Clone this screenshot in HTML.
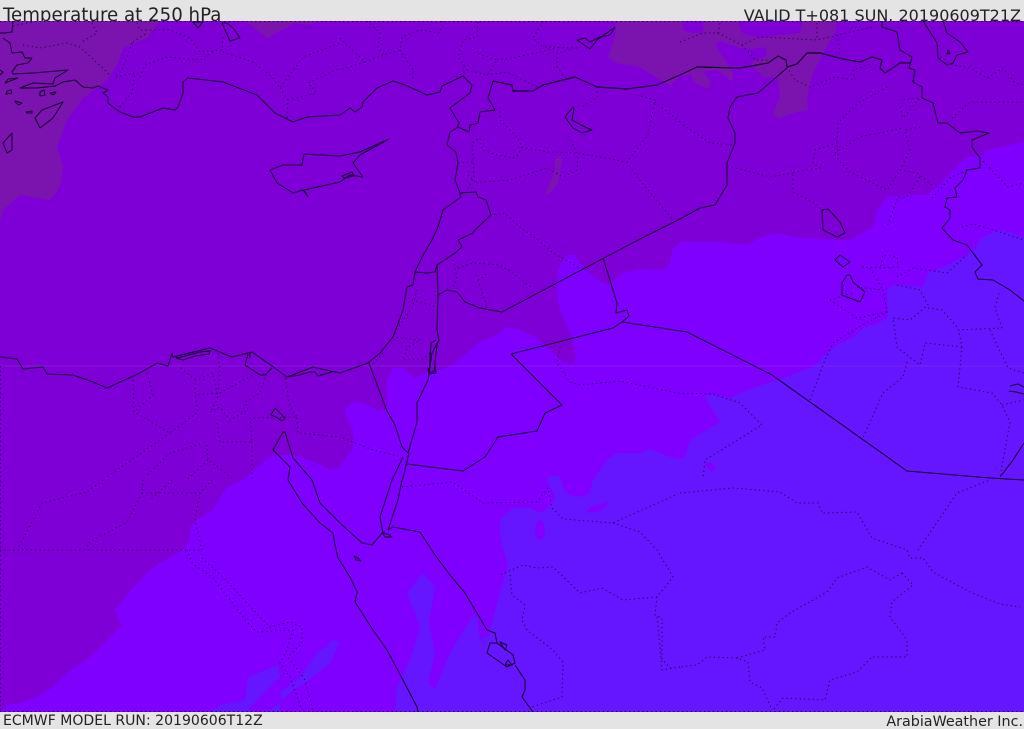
<!DOCTYPE html>
<html><head><meta charset="utf-8"><title>Temperature at 250 hPa</title>
<style>
html,body{margin:0;padding:0;background:#e4e4e4}
#p{position:relative;width:1024px;height:729px;overflow:hidden;background:#e4e4e4;font-family:"DejaVu Sans",sans-serif;color:#222}
.t{position:absolute;white-space:nowrap;line-height:1}
svg{position:absolute;left:0;top:21px}
</style></head><body><div id="p">
<div class="t" style="left:3px;top:7px;font-size:18.2px">Temperature at 250 hPa</div>
<div class="t" style="right:3px;top:8px;font-size:16px">VALID T+081 SUN. 20190609T21Z</div>
<div class="t" style="left:3px;top:714px;font-size:14.05px">ECMWF MODEL RUN: 20190606T12Z</div>
<div class="t" style="right:1px;top:715px;font-size:14.3px">ArabiaWeather Inc.</div>
<svg width="1024" height="691" viewBox="0 21 1024 691" xmlns="http://www.w3.org/2000/svg">
<rect x="0" y="21" width="1024" height="691" fill="#7e00d6"/>
<g fill="#7b14ae">
<path d="M0 21H160L147 38 123 48 118 63 107 80 83 98 67 120 57 147 63 167 60 187 50 200 20 195 3 210 0 222Z"/>
<path d="M245 21 267 38 295 23 308 25 320 21Z"/>
<path d="M617 21 615 37 608 57 617 63 640 67 657 78 670 85 680 76 692 75 693 82 708 89 711 82 703 72 717 70 733 82 733 72 715 45 720 41 740 48 752 49 765 47 767 55 750 63 763 77 777 77 780 97 773 113 778 119 793 113 808 110 807 97 813 73 823 53 835 33 837 21Z"/>
<path d="M560 156 555 160 555 170 547 190 544 195 550 193 558 183 562 160Z"/>
</g>
<g fill="#7e00d6">
<path d="M683 21 683 30 692 33 703 33 704 21Z"/>
<path d="M738 21 742 33 760 38 780 35 800 33 802 23 802 21Z"/>
</g>
<path fill="#7f00ff" d="M0 712V711L7 705 20 703 37 697 53 687 67 673 90 657 107 640 122 625 115 610 127 595 147 573 160 563 183 550 190 540 190 527 197 520 213 510 220 497 227 487 243 480 257 467 273 455 293 455 317 463 330 470 340 467 353 447 353 430 345 413 345 410 353 402 363 403 377 410 387 411 387 380 393 368 403 368 415 378 427 373 440 370 453 365 468 352 480 342 493 337 507 327 520 330 537 338 550 350 560 360 573 365 576 357 572 337 560 310 557 293 558 270 567 255 575 255 583 267 598 280 608 285 623 273 640 269 663 270 670 263 672 250 680 242 720 242 747 245 760 238 777 233 800 238 840 240 850 240 873 227 877 210 887 197 907 195 927 195 937 187 950 173 963 160 970 156 980 157 987 150 1024 142V712Z"/>
<path fill="#6516ff" d="M395 712 397 687 410 660 420 627 407 593 423 573 435 587 429 623 435 653 428 683 435 689 450 653 473 615 477 617 480 639 488 637 500 593 508 565 500 537 500 520 513 508 530 508 540 513 550 507 555 497 547 480 549 476 560 476 564 490 570 495 580 497 589 494 593 480 607 460 617 453 640 453 650 449 670 457 680 459 685 457 690 440 703 432 720 422 713 410 705 398 710 394 730 398 747 390 777 380 813 367 827 353 840 343 853 338 863 328 880 323 888 315 887 290 893 285 923 287 928 273 943 267 963 257 977 247 980 238 1000 230 1013 233 1024 238V712Z"/>
<g fill="#6516ff">
<path d="M210 712 220 705 245 700 248 677 263 671 278 665 280 677 257 700 247 712Z"/>
<path d="M282 700 280 693 300 677 317 653 333 640 340 642 330 663 307 682 293 690Z"/>
<path d="M267 712 280 703 280 712Z"/>
</g>
<g fill="#7f00ff">
<ellipse cx="540" cy="530" rx="5" ry="10"/>
<path d="M586 513 590 507 608 502 606 507 596 512Z"/>
<path d="M705 464 710 462 716 469 711 472Z"/>
</g>
<path d="M0 366H1024" stroke="#8f2ee0" stroke-width="1" opacity=".55" fill="none"/>

<g fill="none" stroke="#12002e" stroke-width="1" stroke-dasharray="1.2 3.2" opacity=".9">
<path d="M0 21.5H1024M0 711.5H1024"/>
<path d="M.5 366V712M0 550H202"/>
<path d="M13 26 33 22M23 45 40 48 67 43 80 47 110 75M92 23 97 33 80 43M137 23 140 30 170 30 190 38 200 52 222 50 223 37M133 42 147 33M132 43 122 70 115 77 135 73 132 93 117 110M140 77 145 65 167 57 200 60 213 52M223 52 253 62 273 78 280 88 303 57 340 43M280 88 288 100 287 118M288 100 317 93 308 83 340 68"/>
<path d="M340 38 350 48 365 62 340 70M365 62 383 55 400 50 402 37 420 30 440 33 443 21M367 21 380 33 378 47 383 55M400 50 413 70 413 83M478 22 477 37 463 40 458 57 467 70 457 77M467 70 487 75 497 60 473 52M497 60 517 57 540 52 560 47M543 21 533 38 543 47 578 48M557 67 557 53 573 49M557 67 565 78M487 75 507 72 537 87M597 87 597 98 580 108"/>
<path d="M500 107 500 120 517 137 522 147 518 155 513 158 497 155 482 150 480 138 472 143 473 160 474 177 467 190M522 147 547 152 577 153 627 162 648 135 655 100 638 95M655 102 680 122M627 162 637 177 673 220M577 153 567 133M578 157 577 170 563 177 547 168 510 180 483 182 475 182M468 175 475 182M458 163 473 162M490 215 505 213 520 227 538 240 553 253 580 268"/>
<path d="M453 260 457 277 453 287M458 268 473 263 500 265 513 273 532 288M478 280 488 273M478 280 487 307M417 290 412 308 398 327 393 337 420 340 407 348 403 360 423 359 430 353M412 300 437 307M383 353 372 365M560 347 557 363 570 382 580 385 620 381 677 393 713 394 740 403 762 425 705 460 703 478M343 438 373 450 398 456M402 487 453 482 483 503 537 502 548 488 552 508 563 519 613 523 678 494"/>
<path d="M613 523 640 532 657 550 673 577 657 597 655 615 662 618 662 660 673 670M657 597 623 600 602 588 580 593 553 567 537 568 523 565 500 575M510 575 512 595 525 605 522 620 527 630 553 650 563 662 562 697 532 707M680 667 662 670 657 615"/>
<path d="M680 493 733 488 780 492 797 503 818 503 822 513 857 512 872 538 907 550 910 558 923 558 933 572 970 592 1000 604 1020 607M918 550 957 493 990 480M902 573 913 585 892 602 890 617 907 640 907 657 872 657 857 672 830 680 825 700 783 698 773 710M902 573 890 580 867 567 837 578 827 592 790 613 777 623 775 637 763 637 765 650 737 658 748 662 750 682 762 688 772 710M737 658 707 657 697 665 680 667"/>
<path d="M810 400 825 360 833 343 857 328 887 312 883 290 857 287M830 300 857 318 887 312M830 300 852 293M862 267 883 268 898 267 897 257 883 255 880 268M870 268 883 290M897 277 913 268 947 273 967 255M897 285 920 290 928 305 910 320 893 318 897 347 920 365 925 343 962 347M928 308 942 310 958 328 962 347 958 387 992 393 1002 405 1010 422 1000 477M1002 405 1024 400M907 362 903 377 883 393 862 440M958 330 1002 328 995 308 1000 290M990 330 1008 368 1024 373"/>
<path d="M680 42 703 33 718 33 720 23M718 33 742 45 760 37 780 38 817 40 838 35 873 27M742 45 753 57 755 60 767 60M838 35 840 57M817 23 817 40M787 67 795 80 810 87 835 77 855 80 853 70 873 63M887 87 858 103 838 123 837 143 838 160 850 172 887 190 900 170 910 150 905 130 920 127M837 143 815 150 813 163 820 168 793 172 793 192 815 203 822 210M793 173 770 177 728 166M835 153 860 137 903 128M900 170 917 173 932 185M920 177 907 197 898 197 887 227M683 125 710 143 732 145M900 107 903 118 920 98 900 100M940 57 953 65 970 68 987 78 1003 68 1015 83 1024 85M952 118 970 102 1024 102M980 158 1008 187 1024 183M932 198 950 178 967 170M962 227 973 224 1000 232 1024 240"/>
<path d="M133 380 134 412 170 433 198 412 195 395 195 380 180 367M147 373 153 395 134 412M170 433 107 477M195 380 213 373 217 393 195 395M218 353 220 373 217 400 210 412 220 407 230 420 248 410 245 402 260 393 267 373M220 393 240 382 253 375M217 423 220 442 252 442 250 418 297 417 298 433 340 437M285 378 290 407 297 417M252 442V480M207 445 208 460 218 467 232 478M200 444 170 453 145 477M208 460 187 480M103 480 87 492 42 503 18 548M143 480 142 493 127 522 88 543 87 550M142 493 200 493 212 480M200 493 195 520 202 550M187 550 192 563 213 578 247 622 257 632 293 630 287 650 280 663 290 677 302 710M202 558 223 577 260 617 270 627 290 622 302 627 302 643 288 657 305 680 313 710M172 480 150 500"/>
</g>

<g fill="none" stroke="#10002a" stroke-width="1" stroke-linejoin="round">
<path d="M13 21 12 32 5 33 0 33M3 38 10 43 12 53 22 52 25 58 32 58 28 63 17 65 12 72 13 74 33 73 68 70 55 78 53 84 33 83 20 88 37 88 55 86 63 82 75 80 83 87 93 88 98 86 108 90 103 93 108 97 108 103 120 112 133 117 140 117 163 108 175 110 178 107 183 93 183 82 188 78 223 82 257 95 275 113 293 122 307 117 340 115 350 108 355 112 362 107 363 102 377 88 393 81 405 85 427 95 440 92 442 86 463 76 472 85 470 93 450 108 459 123 457 128 450 132 447 145 456 152 458 163 455 180 460 193 461 197 443 210 438 227 432 240 422 257 415 272 413 285 407 287 403 310 393 337 380 353 368 363 340 373 330 371 313 367 287 377 272 366 252 352 232 357 210 348 173 357 172 353 168 366 157 363 140 373 107 388 93 382 73 375 47 374 43 367 23 369 17 359 0 357"/>
<path d="M176 358 185 356 200 352 210 351 209 354 195 356 183 360ZM248 354 245 365 260 375 265 375 272 368M287 377 300 375 310 372 315 372 318 376 325 374 332 372M250 352 250 358"/>
<path stroke-width="1.2" d="M493 81 512 85 513 91 533 91 543 85 575 77 597 87 627 89 657 85 680 75 697 67 740 68 768 63 778 56 786 60 787 67 797 64 807 53 820 53 843 59 860 62 872 57 882 60 880 68 885 73 900 63 910 63"/>
<path d="M493 81 488 98 495 110 480 112 478 123 470 125 469 132 458 127M460 193 476 192 478 197 486 200 491 215 475 230 473 233 458 240 462 247 455 253 437 265 435 272 427 273 415 272M437 265 438 295 437 330 439 340 432 353 428 380 417 403 417 422 408 453M438 295 447 290 457 292 465 302 480 308 502 312 638 240 680 219 700 208 715 205 727 185 727 163 735 143 735 133 728 118 730 107 737 97 758 93 787 68"/>
<path d="M436 340 431 343 430 360 429 372 434 372 437 345 439 340M428 368 429 374 436 373 435 366"/>
<path d="M408 453 402 447 395 425 387 411 369 363M403 457 393 478 392 480 380 517 383 533 385 532M409 453 403 478 402 480 398 500 388 530 393 527 420 532 435 555 450 575 465 593 487 630 495 633 497 643 490 643 487 653 507 667 515 663 513 655 497 643M515 665 525 680 525 690 522 697 533 712"/>
<path d="M383 532 372 545 362 543 340 523 320 503 312 480 293 458 285 432 283 432 273 450 290 467 288 480 302 503 320 523 333 533 335 545 338 558 340 561 350 577 357 592 355 602 373 630 387 650 403 680 417 707 418 712"/>
<path d="M354 556 358 558 361 561 356 560Z M271 415 275 408 279 412 285 418 282 421 276 417Z M383 534 388 534 392 537 385 537Z"/>
<path d="M270 170 277 183 293 193 303 190 308 197 304 190 340 182 350 175 363 177 353 163 360 155 389 139 360 152 340 156 304 154 302 165 283 165Z M342 176 352 172 354 176 344 178Z"/>
<path d="M63 102 42 110 35 118 40 128 53 118ZM12 133 3 143 7 153 12 150ZM222 23 230 41 240 38 233 28 227 23ZM193 22 198 28 203 22ZM0 75 3 72 0 70M5 83 18 78 8 79ZM6 94 12 93 11 90 7 91ZM15 101 22 103 19 105 16 103ZM26 112 32 111 32 113 27 113ZM40 92 44 90 45 95 40 96ZM50 93 56 92 53 95Z"/>
<path d="M577 40 590 49 597 40 615 27M577 40 585 38 590 42 600 37 610 35 615 27M573 107 565 117 573 128 582 133 592 130 585 127 572 120 574 108Z"/>
<path d="M882 21 882 27 897 32 900 50 912 57 909 68 915 70 913 82 922 87 922 98 933 103 938 123 947 123 960 133 977 131 989 133 972 140 972 147 980 158 980 168 967 170 963 180 955 188 957 197 947 198 945 207 950 210 950 218 942 228 953 240 967 245 973 253 982 265 975 272 978 279 993 280 1010 290 1024 301"/>
<path d="M923 21 937 43 938 58 947 65 953 63 957 55 968 52 960 42 947 33 943 21M948 50 950 53 947 54Z"/>
<path d="M603 258 617 303 616 313 627 310 629 316 622 322 613 328 511 354 562 405 545 413 537 431 498 437 485 457 463 471 407 464M622 322 687 332 772 375 907 471 990 478 1024 480M1000 477 1013 460 1024 443"/>
<path d="M835 260 840 255 850 262 843 267ZM847 275 842 283 842 295 860 302 865 292 853 282 850 275ZM822 210 823 230 837 237 845 233 840 222 828 209ZM1010 386 1018 384 1024 387M1009 391 1016 392 1024 394"/>
<path d="M500 642 507 645 505 650ZM508 660 512 665 505 665Z"/>
</g>
</svg>
</div></body></html>
